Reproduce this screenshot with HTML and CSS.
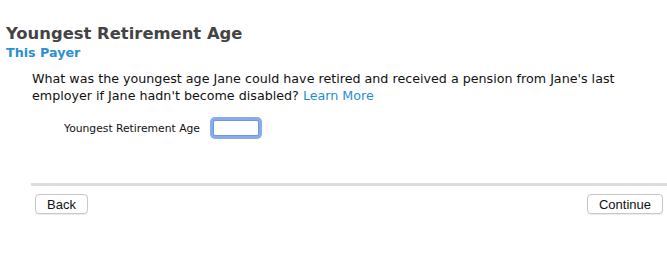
FILE: index.html
```html
<!DOCTYPE html>
<html>
<head>
<meta charset="utf-8">
<link rel="stylesheet" href="styles.css">
</head>
<body>
<div class="page">
  <header class="head">
    <h1 class="title">Youngest Retirement Age</h1>
    <h2 class="subtitle">This Payer</h2>
  </header>
  <section class="body">
    <p class="question">What was the youngest age Jane could have retired and received a pension from Jane's last employer if Jane hadn't become disabled? <a class="link" href="#">Learn More</a></p>
    <div class="field">
      <label class="field-label" for="age">Youngest Retirement Age</label>
      <input class="field-input" id="age" type="text">
    </div>
  </section>
  <footer class="foot">
    <div class="rule"></div>
    <div class="buttons">
      <button class="btn">Back</button>
      <button class="btn">Continue</button>
    </div>
  </footer>
</div>
</body>
</html>
```
FILE: styles.css
```css
html, body {
  margin: 0;
  padding: 0;
  background: #ffffff;
}
body {
  font-family: "DejaVu Sans", "Liberation Sans", sans-serif;
  color: #111;
  width: 667px;
  height: 276px;
  overflow: hidden;
}
.page {
  display: flex;
  flex-direction: column;
}
.head {
  padding: 24px 0 0 6px;
}
.title {
  margin: 0;
  font-size: 16.4px;
  line-height: 20px;
  font-weight: bold;
  color: #444;
}
.subtitle {
  margin: 0;
  font-size: 12.7px;
  line-height: 17px;
  font-weight: bold;
  color: #2b8fd0;
}
.body {
  padding: 9px 0 0 32px;
}
.question {
  margin: 0;
  font-size: 12.7px;
  line-height: 17px;
  color: #111;
  width: 612px;
}
.link {
  color: #1f8fcf;
  text-decoration: none;
}
.field {
  display: flex;
  align-items: center;
  margin-top: 16px;
  padding-left: 32px;
  gap: 13px;
}
.field-label {
  font-size: 10.75px;
  color: #111;
}
.field-input {
  width: 46px;
  height: 16px;
  box-sizing: border-box;
  padding: 0 2px;
  margin: 0;
  border: 1px solid #7098da;
  border-radius: 2px;
  outline: none;
  box-shadow: 0 0 0 3px #86acea;
  background: #fff;
}
.foot {
  margin-top: 47px;
  padding-left: 31px;
}
.rule {
  height: 3px;
  background: #dddddd;
}
.buttons {
  display: flex;
  justify-content: space-between;
  padding: 8px 4px 0 4px;
}
.btn {
  font-family: "Liberation Sans", "DejaVu Sans", sans-serif;
  font-size: 13px;
  color: #111;
  background: #fff;
  border: 1px solid #c8c8c8;
  border-radius: 4px;
  height: 20px;
  padding: 0 11px;
  box-shadow: 0 1px 1px rgba(0,0,0,0.08);
}
```
